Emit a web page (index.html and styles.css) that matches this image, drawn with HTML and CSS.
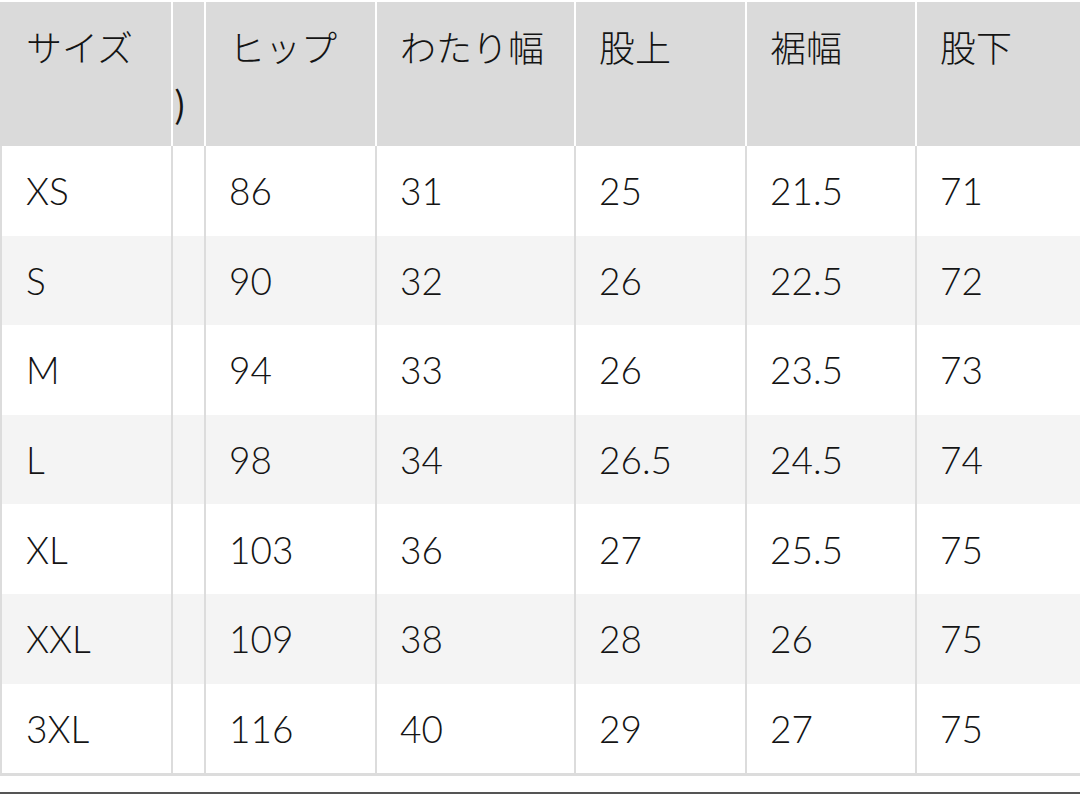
FILE: index.html
```html
<!DOCTYPE html>
<html lang="ja">
<head>
<meta charset="utf-8">
<title>サイズ表</title>
<link rel="stylesheet" href="styles.css">
</head>
<body>
<div class="page">
  <table class="size-table">
    <thead>
      <tr>
        <th class="c1">サイズ</th>
        <th class="c2"><span class="clip">)</span></th>
        <th class="c3">ヒップ</th>
        <th class="c4">わたり幅</th>
        <th class="c5">股上</th>
        <th class="c6">裾幅</th>
        <th class="c7">股下</th>
      </tr>
    </thead>
    <tbody>
      <tr><td class="c1">XS</td><td class="c2"></td><td>86</td><td>31</td><td>25</td><td>21.5</td><td class="c7">71</td></tr>
      <tr><td class="c1">S</td><td class="c2"></td><td>90</td><td>32</td><td>26</td><td>22.5</td><td class="c7">72</td></tr>
      <tr><td class="c1">M</td><td class="c2"></td><td>94</td><td>33</td><td>26</td><td>23.5</td><td class="c7">73</td></tr>
      <tr><td class="c1">L</td><td class="c2"></td><td>98</td><td>34</td><td>26.5</td><td>24.5</td><td class="c7">74</td></tr>
      <tr><td class="c1">XL</td><td class="c2"></td><td>103</td><td>36</td><td>27</td><td>25.5</td><td class="c7">75</td></tr>
      <tr><td class="c1">XXL</td><td class="c2"></td><td>109</td><td>38</td><td>28</td><td>26</td><td class="c7">75</td></tr>
      <tr><td class="c1">3XL</td><td class="c2"></td><td>116</td><td>40</td><td>29</td><td>27</td><td class="c7">75</td></tr>
    </tbody>
  </table>
  <div class="rule"></div>
</div>
</body>
</html>
```

FILE: styles.css
```css
html, body {
  margin: 0;
  padding: 0;
  background: #ffffff;
}

body {
  width: 1080px;
  height: 795px;
  overflow: hidden;
  font-family: "Lato", "Noto Sans CJK JP", sans-serif;
  color: #141414;
}

.page {
  padding-top: 2px;
  display: flex;
  flex-direction: column;
}

.size-table {
  border-collapse: separate;
  border-spacing: 0;
  table-layout: fixed;
  width: 1100px;
  border-bottom: 3px solid #dcdcdc;
}

.size-table th,
.size-table td {
  padding: 0 0 0 23px;
  text-align: left;
  border-right: 2px solid #dcdcdc;
  overflow: hidden;
  white-space: nowrap;
}

.size-table th {
  background: #dadada;
  border-right-color: #ffffff;
  height: 144px;
  vertical-align: top;
  font-family: "Noto Sans CJK JP", sans-serif;
  font-weight: 300;
  font-size: 36px;
  line-height: 56px;
  padding-top: 16px;
  box-sizing: border-box;
}

.size-table td {
  height: 89.6px;
  vertical-align: middle;
  font-weight: 300;
  font-size: 37px;
  box-sizing: border-box;
}

.size-table tbody tr:nth-child(even) td {
  background: #f4f4f4;
}

.size-table .c1 { width: 173px; padding-left: 24px; }
.size-table td.c1 { border-left: 2px solid #dcdcdc; }
.size-table th.c1 { border-left: 2px solid #dadada; }
.size-table .c2 { width: 33px; padding-left: 1px; }
.size-table .c3 { width: 171px; }
.size-table .c4 { width: 199px; }
.size-table .c5 { width: 171px; }
.size-table .c6 { width: 170px; }
.size-table .c7 { border-right: none; }

.clip {
  display: block;
  margin-top: 54px;
  font-family: "Noto Sans CJK JP", sans-serif;
  font-weight: 400;
  font-size: 36px;
  line-height: 60px;
}

.rule {
  margin-top: 16px;
  height: 2px;
  background: #555555;
}
```
